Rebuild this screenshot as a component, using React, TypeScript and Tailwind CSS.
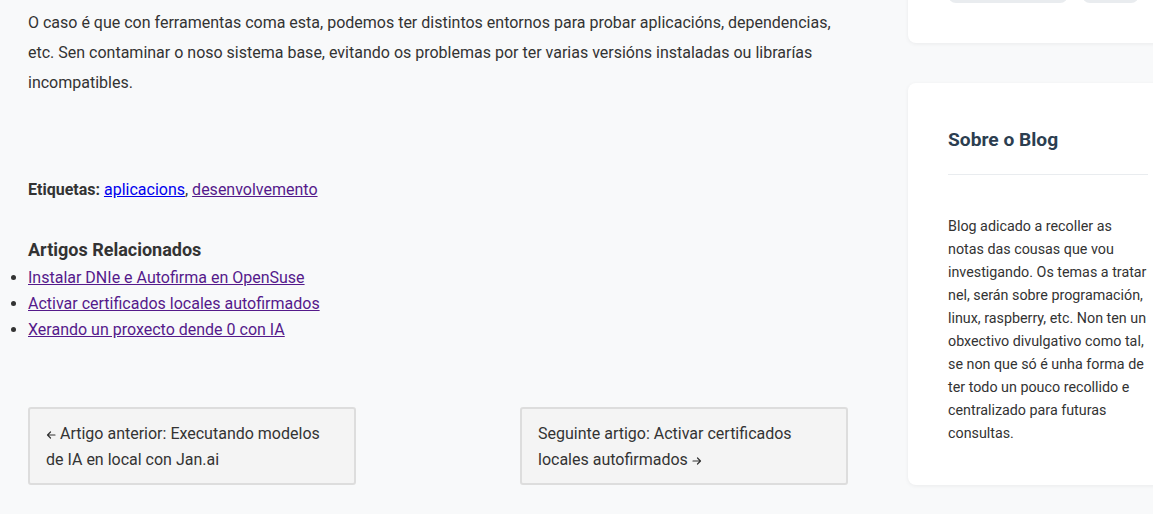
const related = [
  'Instalar DNIe e Autofirma en OpenSuse',
  'Activar certificados locales autofirmados',
  'Xerando un proxecto dende 0 con IA',
]

function Arrow({ dir }: { dir: 'left' | 'right' }) {
  return (
    <svg
      viewBox="0 0 10 10"
      className="inline-block w-[10px] h-[10px] align-[-1px]"
      fill="none"
      stroke="currentColor"
      strokeWidth="1.2"
      strokeLinecap="round"
      strokeLinejoin="round"
    >
      {dir === 'left' ? <path d="M9 5H1.5M4.5 2L1.5 5l3 3" /> : <path d="M1 5h7.5M5.5 2l3 3-3 3" />}
    </svg>
  )
}

export default function App() {
  return (
    <div className="w-full h-[514px] overflow-hidden bg-[#f8f9fa] font-['Roboto',sans-serif] text-[#333]">
      <div className="flex w-[1188px]">
        <main className="w-[820px] ml-[28px] pt-[8px]">
          <p className="text-[16px] leading-[30px]">
            O caso é que con ferramentas coma esta, podemos ter distintos entornos para probar aplicacións, dependencias,
            etc. Sen contaminar o noso sistema base, evitando os problemas por ter varias versións instaladas ou librarías
            incompatibles.
          </p>

          <p className="mt-[79px] text-[16px] leading-[26px]">
            <strong className="font-bold">Etiquetas:</strong>{' '}
            <a href="#" className="text-[#0000ee] underline">aplicacions</a>,{' '}
            <a href="#" className="text-[#551a8b] underline">desenvolvemento</a>
          </p>

          <h3 className="mt-[32px] text-[18px] leading-[30px] font-bold">Artigos Relacionados</h3>
          <ul className="list-disc pl-0 text-[16px] leading-[26px]">
            {related.map((title) => (
              <li key={title}>
                <a href="#" className="text-[#551a8b] underline">{title}</a>
              </li>
            ))}
          </ul>

          <div className="mt-[64px] flex justify-between">
            <a href="#" className="w-[328px] border-2 border-[#dddddd] bg-[#f4f4f4] rounded-[3px] px-[16px] pt-[12px] pb-[10px] text-[16px] leading-[26px]">
              <Arrow dir="left" /> Artigo anterior: Executando modelos de IA en local con Jan.ai
            </a>
            <a href="#" className="w-[328px] border-2 border-[#dddddd] bg-[#f4f4f4] rounded-[3px] px-[16px] pt-[12px] pb-[10px] text-[16px] leading-[26px]">
              Seguinte artigo: Activar certificados locales autofirmados <Arrow dir="right" />
            </a>
          </div>
        </main>

        <aside className="w-[280px] ml-[60px] -mt-[67px] flex flex-col gap-[40px]">
          <div className="bg-white rounded-[8px] shadow-[0_1px_4px_rgba(0,0,0,0.06)] p-[40px]">
            <div className="flex gap-[14px]">
              <span className="h-[30px] w-[120px] rounded-[8px] bg-[#e9ecef]" />
              <span className="h-[30px] w-[57px] rounded-[8px] bg-[#e9ecef]" />
            </div>
          </div>

          <div className="bg-white rounded-[8px] shadow-[0_1px_4px_rgba(0,0,0,0.06)] p-[40px]">
            <h3 className="text-[19.2px] leading-[33px] font-bold text-[#2c3e50]">Sobre o Blog</h3>
            <div className="mt-[18px] border-t border-[#e9ecef]" />
            <p className="mt-[40px] text-[14.3px] leading-[23px] text-[#333]">
              Blog adicado a recoller as notas das cousas que vou investigando. Os temas a tratar nel, serán sobre
              programación, linux, raspberry, etc. Non ten un obxectivo divulgativo como tal, se non que só é unha
              forma de ter todo un pouco recollido e centralizado para futuras consultas.
            </p>
          </div>
        </aside>
      </div>
    </div>
  )
}
